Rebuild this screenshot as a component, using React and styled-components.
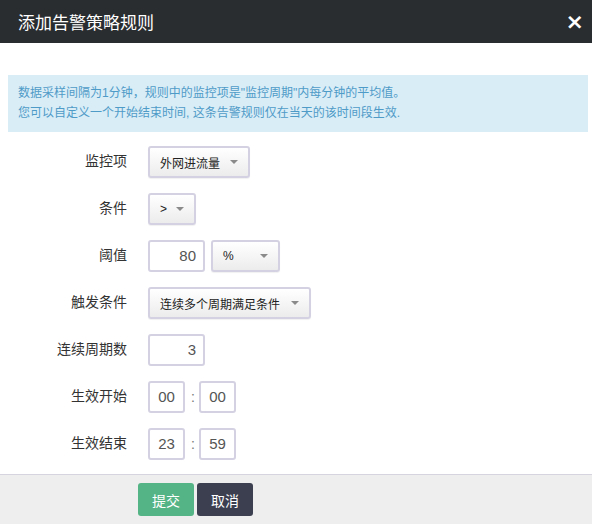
import styled, { createGlobalStyle } from "styled-components";

const GlobalStyle = createGlobalStyle`
  html, body {
    margin: 0;
    padding: 0;
    background: #ffffff;
  }
  body {
    font-family: "Liberation Sans", "Noto Sans CJK SC", sans-serif;
    color: #333;
  }
`;

const FONT = `"Liberation Sans", "Noto Sans CJK SC", sans-serif`;

const Caret = () => (
  <svg width="8" height="4" viewBox="0 0 8 4">
    <path d="M0 0h8L4 4z" fill="#8a8a8a" />
  </svg>
);

const App = () => {
  return (
    <>
      <GlobalStyle />
      <Modal>
        <Header>
          <Title>添加告警策略规则</Title>
          <Close>×</Close>
        </Header>
        <Body>
          <Alert>
            <p>数据采样间隔为1分钟，规则中的监控项是"监控周期"内每分钟的平均值。</p>
            <p>您可以自定义一个开始结束时间, 这条告警规则仅在当天的该时间段生效.</p>
          </Alert>
          <Form>
            <Label>监控项</Label>
            <Controls>
              <Select $width={102}>
                外网进流量
                <Caret />
              </Select>
            </Controls>

            <Label>条件</Label>
            <Controls>
              <Select $width={48}>
                &gt;
                <Caret />
              </Select>
            </Controls>

            <Label>阈值</Label>
            <Controls>
              <Input $width={57} $align="right" defaultValue="80" />
              <Select $width={69}>
                %
                <Caret />
              </Select>
            </Controls>

            <Label>触发条件</Label>
            <Controls>
              <Select $width={163}>
                连续多个周期满足条件
                <Caret />
              </Select>
            </Controls>

            <Label>连续周期数</Label>
            <Controls>
              <Input $width={57} $align="right" defaultValue="3" />
            </Controls>

            <Label>生效开始</Label>
            <Controls>
              <Input $width={37} $align="center" defaultValue="00" />
              <Colon>:</Colon>
              <Input $width={37} $align="center" defaultValue="00" />
            </Controls>

            <Label>生效结束</Label>
            <Controls>
              <Input $width={37} $align="center" defaultValue="23" />
              <Colon>:</Colon>
              <Input $width={37} $align="center" defaultValue="59" />
            </Controls>
          </Form>
        </Body>
        <Footer>
          <Button $variant="primary">提交</Button>
          <Button $variant="dark">取消</Button>
        </Footer>
      </Modal>
    </>
  );
};

const Modal = styled.div`
  width: 592px;
  height: 524px;
  display: flex;
  flex-direction: column;
  background: #fff;
  overflow: hidden;
`;

const Header = styled.div`
  height: 43px;
  flex: none;
  background: #2a2d2f;
  display: flex;
  align-items: center;
  justify-content: space-between;
  padding: 0 8px 0 18px;
`;

const Title = styled.h3`
  margin: 0;
  font-family: ${FONT};
  font-weight: 400;
  font-size: 17px;
  color: #fff;
`;

const Close = styled.span`
  font-family: "DejaVu Sans", sans-serif;
  font-weight: 700;
  font-size: 22px;
  line-height: 1;
  color: #fff;
`;

const Body = styled.div`
  flex: 1;
  padding: 32px 4px 0 8px;
`;

const Alert = styled.div`
  background: #d9edf7;
  color: #4f9bc7;
  font-family: ${FONT};
  font-size: 12px;
  line-height: 20px;
  padding: 8px 10px 9px;
  height: 57px;
  box-sizing: border-box;

  p {
    margin: 0;
  }
`;

const Form = styled.div`
  display: grid;
  grid-template-columns: 119px 1fr;
  column-gap: 21px;
  row-gap: 15px;
  margin-top: 14px;
`;

const Label = styled.label`
  font-family: ${FONT};
  font-size: 14px;
  color: #333;
  text-align: right;
  height: 32px;
  line-height: 30px;
`;

const Controls = styled.div`
  display: flex;
  align-items: center;
  gap: 6px;
  height: 32px;
`;

const Select = styled.div`
  width: ${(p) => p.$width}px;
  height: 32px;
  box-sizing: border-box;
  display: flex;
  align-items: center;
  justify-content: space-between;
  padding: 0 10px 0 10px;
  border: 2px solid #d4d2e2;
  border-radius: 3px;
  background: linear-gradient(#ffffff, #ececec);
  box-shadow: 0 1px 1px rgba(0, 0, 0, 0.06);
  font-family: ${FONT};
  font-size: 12px;
  color: #222;
`;

const Input = styled.input`
  width: ${(p) => p.$width}px;
  height: 32px;
  box-sizing: border-box;
  border: 2px solid #d4d2e2;
  border-radius: 3px;
  padding: 0 ${(p) => (p.$align === "right" ? "7px" : "0")} 2px 0;
  text-align: ${(p) => p.$align};
  font-family: ${FONT};
  font-size: 15px;
  color: #555;
  background: #fff;
  outline: none;
`;

const Colon = styled.span`
  font-family: ${FONT};
  font-size: 14px;
  color: #777;
  width: 2px;
  text-align: center;
`;

const Footer = styled.div`
  height: 49px;
  flex: none;
  background: #eeeeee;
  border-top: 1px solid #d6d4de;
  display: flex;
  align-items: center;
  gap: 3px;
  padding-left: 138px;
`;

const Button = styled.button`
  width: 56px;
  height: 33px;
  border: none;
  border-radius: 3px;
  font-family: ${FONT};
  font-size: 14px;
  color: #fff;
  background: ${(p) => (p.$variant === "primary" ? "#55b485" : "#3c3f50")};
  cursor: pointer;
`;

export default App;
